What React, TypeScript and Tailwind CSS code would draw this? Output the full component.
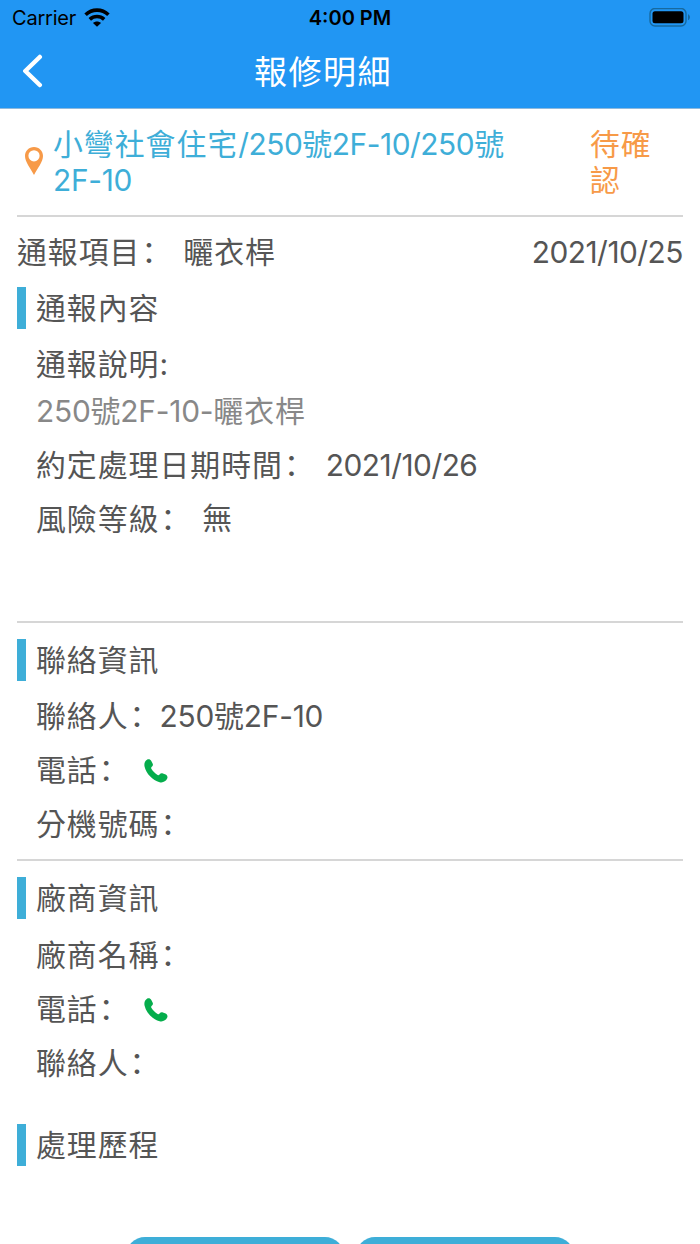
import type { ReactNode } from 'react';

// 全形冒號靠左顯示
function Colon() {
  return (
    <span lang="zh-CN" className="inline-block translate-x-px -translate-y-px font-['Noto_Sans_CJK_SC',sans-serif] leading-none">
      {'\uFF1A'}
    </span>
  );
}

function SectionTitle({ children }: { children: ReactNode }) {
  return (
    <div className="flex h-[42px] items-center">
      <div className="h-full w-[9px] bg-[#3eaed8]" />
      <h2 className="ml-2.5">{children}</h2>
    </div>
  );
}

function Row({ label, children }: { label: string; children?: ReactNode }) {
  return (
    <div className="flex h-[54px] items-center pl-[19px]">
      <span>
        {label}
        <Colon />
      </span>
      {children}
    </div>
  );
}

function Divider() {
  return <div className="h-0.5 shrink-0 bg-[#d6d6d6]" />;
}

function PhoneIcon() {
  return (
    <svg className="mt-0.5 ml-[15px] h-6 w-6" viewBox="0 0 24 24" fill="#05ad4c">
      <path d="M3 .7C4.700-.1 6.500.5 7.300 2L8.600 4.400C9.200 5.600 9 6.500 8.300 7.200L7.500 8C7 8.600 7.100 9.300 7.500 9.900C9 12.200 11.200 14.400 13.600 15.900C14.300 16.300 14.900 16.200 15.400 15.700L15.900 15.100C16.600 14.100 17.800 13.900 18.900 14.400L21.600 15.600C23.300 16.400 23.900 18 23.200 19.600C21.900 22.600 18.800 23.900 15.600 23.200C8.600 21.400 2.100 14.700.6 7.800C-.1 4.800.8 1.900 3 .7Z" />
    </svg>
  );
}

function StatusBar() {
  return (
    <div className="flex h-9 items-center justify-between pr-[9px] pl-3 text-[20px] leading-6 text-black">
      <div className="flex w-[120px] items-center gap-2">
        <span className="tracking-[-0.2px]">Carrier</span>
        <svg className="mb-0.5 h-[19px] w-[26px]" viewBox="0 0 26 19" fill="none" stroke="black" strokeWidth="3.6">
          <path d="M1.600 6.800C8 .6 18 .6 24.400 6.800" />
          <path d="M5.800 11.300C10 7.500 16 7.500 20.200 11.300" />
          <path d="M9 14.900C11.300 12.900 14.700 12.900 17 14.900L13 18.800Z" fill="black" stroke="none" />
        </svg>
      </div>
      <span className="mr-[3px] font-semibold">4:00 PM</span>
      <div className="flex w-[120px] justify-end">
        <svg className="h-5 w-[42px]" viewBox="0 0 42 20">
          <rect x="1" y="0.500" width="36" height="17.500" rx="5" fill="none" stroke="#17699f" strokeWidth="1.400" />
          <rect x="3.500" y="3.300" width="31" height="12" rx="2.500" fill="black" />
          <path d="M39 6.300C41.600 7.300 41.600 11.200 39 12.200Z" fill="#17699f" />
        </svg>
      </div>
    </div>
  );
}

export default function App() {
  return (
    <div className="flex h-[1244px] w-[700px] flex-col overflow-hidden bg-white font-[Inter,'Noto_Sans_CJK_TC',sans-serif] text-[#555]">
      <header className="h-[109px] shrink-0 border-b border-[#8fb9dc] bg-[#2196f3]">
        <StatusBar />
        <div className="flex h-[70px] items-center pl-[22px] text-white">
          <svg className="h-[34px] w-[34px]" viewBox="0 0 34 34" fill="none" stroke="white" strokeWidth="4.500" strokeLinecap="round" strokeLinejoin="round">
            <path d="M17.800 3L3.300 17L17.800 31" />
          </svg>
          <h1 className="mt-1 ml-[198px] text-[33px] font-[390] tracking-[1.500px]">報修明細</h1>
        </div>
      </header>

      <main className="flex shrink-0 flex-col px-[17px] text-[29.870px] leading-9 font-[390] tracking-[1px]">
        <div className="flex h-[106px] items-center">
          <svg className="mb-[3px] h-[30px] w-5 shrink-0 translate-x-[7px]" viewBox="0 0 20 30" fill="#f79a48">
            <path fillRule="evenodd" d="M10 1C15.200 1 19 5 19 10C19 16 13.500 22 10 29C6.500 22 1 16 1 10C1 5 4.800 1 10 1ZM10 4.200A5.600 5.600 0 1 0 10 15.400A5.600 5.600 0 1 0 10 4.200Z" />
          </svg>
          <div className="ml-4 w-[470px] text-[#3eaed8]">
            小彎社會住宅
            <span className="tracking-[-0.45px]">/250號2F-10/250號</span>
            <br />
            <span className="tracking-[-0.3px]">2F-10</span>
          </div>
          <div className="ml-auto w-[93px] pr-[30px] text-[#f79a48]">待確認</div>
        </div>
        <Divider />

        <div className="flex h-[70px] items-center justify-between">
          <div>
            通報項目
            <Colon />
            <span className="ml-3">曬衣桿</span>
          </div>
          <span className="tracking-[-0.5px]">2021/10/25</span>
        </div>

        <SectionTitle>通報內容</SectionTitle>
        <div className="mt-[9px] flex h-[52px] items-center pl-[19px]">通報說明:</div>
        <div className="mb-1.5 flex h-[42px] items-center pl-[19px] text-[#888]">
          <span className="tracking-[-0.2px]">250號2F-10-</span>
          曬衣桿
        </div>
        <Row label="約定處理日期時間">
          <span className="ml-3 tracking-[-0.5px]">2021/10/26</span>
        </Row>
        <Row label="風險等級">
          <span className="mb-0.5 ml-3">無</span>
        </Row>
        <div className="h-[75px]" />
        <Divider />

        <div className="mt-4 mb-2">
          <SectionTitle>聯絡資訊</SectionTitle>
        </div>
        <Row label="聯絡人">
          <span className="tracking-[-0.2px]">250號2F-10</span>
        </Row>
        <Row label="電話">
          <PhoneIcon />
        </Row>
        <Row label="分機號碼" />
        <div className="h-2" />
        <Divider />

        <div className="mt-4 mb-[9px]">
          <SectionTitle>廠商資訊</SectionTitle>
        </div>
        <Row label="廠商名稱" />
        <Row label="電話">
          <PhoneIcon />
        </Row>
        <Row label="聯絡人" />

        <div className="mt-[34px]">
          <SectionTitle>處理歷程</SectionTitle>
        </div>
      </main>

      <footer className="mt-[71px] flex shrink-0 justify-center gap-3">
        <button className="h-[75px] w-[218px] rounded-[19px] bg-[#3eaed8]" />
        <button className="h-[75px] w-[218px] rounded-[19px] bg-[#3eaed8]" />
      </footer>
    </div>
  );
}
